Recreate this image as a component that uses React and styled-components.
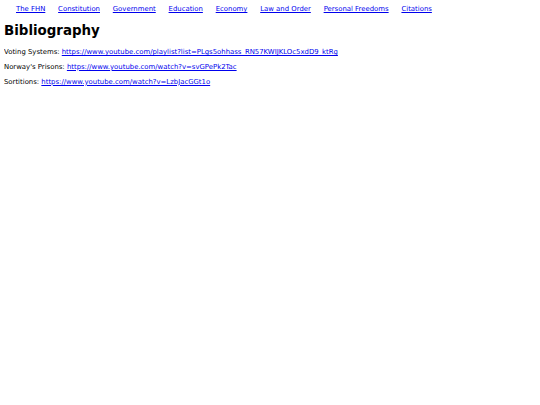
import React from "react";
import styled, { createGlobalStyle } from "styled-components";

const Global = createGlobalStyle`
  html, body { background: #fff; }
  body {
    margin: 4px;
    font-family: "DejaVu Sans", Verdana, sans-serif;
    font-size: 6.9px;
    color: #000;
  }
`;

const Nav = styled.nav`
  display: flex;
  gap: 12.8px;
  padding: 1px 0 0 12px;
  line-height: 8px;
`;

const Link = styled.a`
  color: #0000ee;
  text-decoration: underline;
`;

const Title = styled.h1`
  font-size: 13.4px;
  font-weight: bold;
  margin: 10px 0 9px;
  line-height: 16px;
`;

const Entry = styled.p`
  margin: 6.9px 0;
  line-height: 8px;
`;

const navItems = [
  "The FHN",
  "Constitution",
  "Government",
  "Education",
  "Economy",
  "Law and Order",
  "Personal Freedoms",
  "Citations",
];

const entries = [
  ["Voting Systems", "https://www.youtube.com/playlist?list=PLgs5ohhass_RN57KWIJKLOc5xdD9_ktRg"],
  ["Norway's Prisons", "https://www.youtube.com/watch?v=svGPePk2Tac"],
  ["Sortitions", "https://www.youtube.com/watch?v=LzbJacGGt1o"],
];

export default function App() {
  return (
    <>
      <Global />
      <Nav>
        {navItems.map((n) => (
          <Link key={n} href="#">{n}</Link>
        ))}
      </Nav>
      <Title>Bibliography</Title>
      {entries.map(([label, url]) => (
        <Entry key={label}>
          {label}: <Link href="#">{url}</Link>
        </Entry>
      ))}
    </>
  );
}
